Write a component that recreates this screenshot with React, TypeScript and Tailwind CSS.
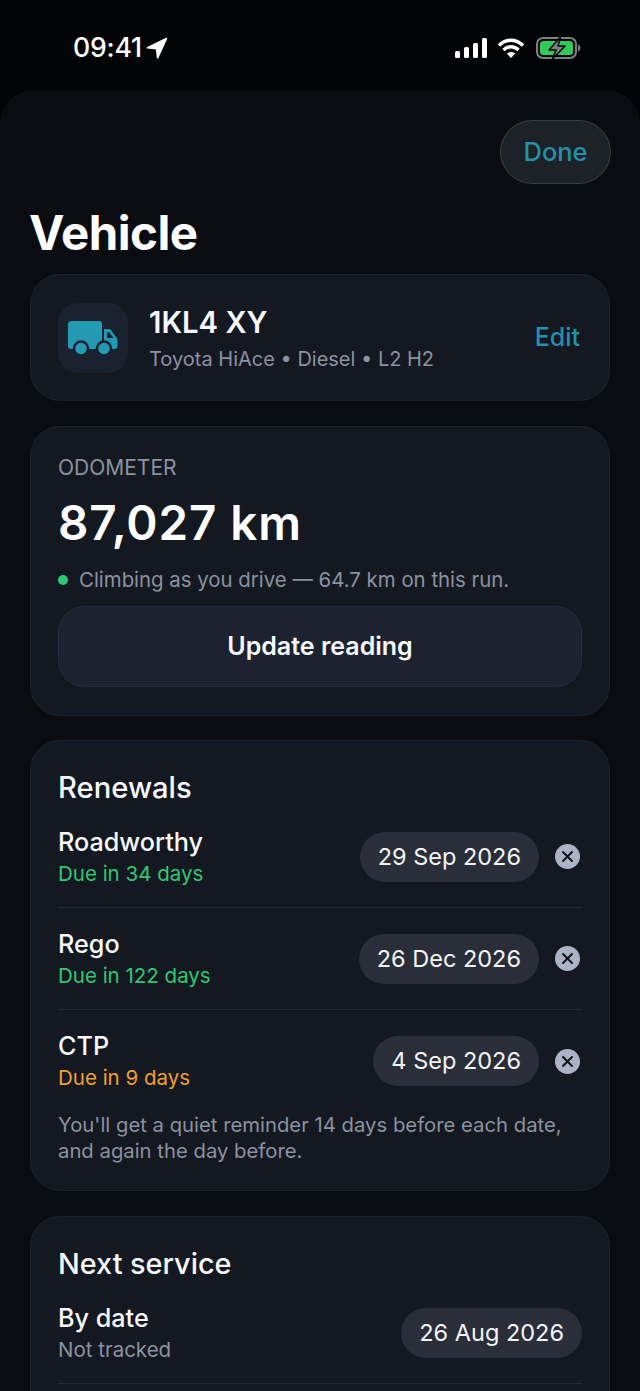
import React from "react";

const font = { fontFamily: "Inter, 'Noto Sans', sans-serif" };

function Row({ title, sub, subCls, date, clear, border }: { title: string; sub: string; subCls: string; date: string; clear?: boolean; border?: boolean }) {
  return (
    <div className={`flex items-center justify-between h-[102px] ${border ? "border-b border-[#232833]" : ""}`}>
      <div className="flex flex-col">
        <span className="text-[25.2px] leading-[34px] font-medium text-[#f7f8fa]">{title}</span>
        <span className={`text-[20.5px] leading-[30px] ${subCls}`}>{sub}</span>
      </div>
      <div className="flex items-center">
        <div className="h-[50px] px-[18px] rounded-full bg-[#2a2e39] flex items-center text-[23.5px] text-[#f3f4f6]">{date}</div>
        {clear && (
          <div className="ml-[16px] mr-[2px] w-[25px] h-[25px] rounded-full bg-[#aab4c4] flex items-center justify-center">
            <svg width="13" height="13" viewBox="0 0 13 13"><path d="M2 2l9 9M11 2l-9 9" stroke="#10141c" strokeWidth="2" strokeLinecap="round" /></svg>
          </div>
        )}
      </div>
    </div>
  );
}

const card = "mx-[30px] rounded-[30px] bg-[#141821] border border-[#1c212b] px-[27px]";

export default function App() {
  return (
    <div style={font} className="h-[1391px] w-[640px] overflow-hidden bg-[#020304] text-white">
      <div className="h-[90px] relative flex items-start justify-between pl-[73px] pr-[59px] pt-[30px]">
        <div className="flex items-center h-[36px]">
          <span className="text-[26.6px] font-medium tracking-[-0.2px]">09:41</span>
          <svg className="ml-[4px]" width="22" height="22" viewBox="0 0 22 22"><path d="M20.5 1.5 L1.5 10.8 L10.6 11.6 L11.6 20.8 Z" fill="#fff" stroke="#fff" strokeWidth="1.6" strokeLinejoin="round" /></svg>
        </div>
        <div className="flex items-center h-[36px] gap-[10px]">
          <svg width="33" height="22" viewBox="0 0 33 22" fill="#fff">
            <rect x="0" y="14" width="5" height="7" rx="1.5" />
            <rect x="9" y="10" width="5" height="11" rx="1.5" />
            <rect x="18" y="6" width="5" height="15" rx="1.5" />
            <rect x="27" y="1" width="5" height="20" rx="1.5" />
          </svg>
          <svg width="28" height="22" viewBox="0 0 28 22" fill="none" stroke="#fff" strokeWidth="3.4">
            <path d="M1 8.5C8 1.500 18 1.500 25 8.500" />
            <path d="M5.500 13C10 8.700 16 8.700 20.500 13" />
            <path d="M13 21l-4.200-4.400c2.400-2 6-2 8.400 0z" fill="#fff" stroke="none" />
          </svg>
          <svg width="45" height="24" viewBox="0 0 45 24">
            <rect x="1" y="2" width="39" height="20" rx="6" fill="none" stroke="#7d7f82" strokeWidth="2" />
            <rect x="4" y="5" width="33" height="14" rx="3.500" fill="#34c759" />
            <path d="M42 8.500c3 .5 3 6.500 0 7z" fill="#7d7f82" />
            <path d="M24.500 1 L13 14 H20 L16.500 23 L29 10 H22 Z" fill="#7d7f82" stroke="#020304" strokeWidth="1.500" strokeLinejoin="round" />
          </svg>
        </div>
      </div>
      <div className="h-[1301px] rounded-t-[34px] bg-[#0a0c11]">
        <div className="flex justify-end pt-[30px] pr-[29px]">
          <div className="w-[111px] h-[64px] rounded-[32px] bg-[#1d2128] border border-[#3a3e45] flex items-center justify-center text-[25.4px] font-medium text-[#2590a8]">Done</div>
        </div>
        <div className="ml-[29px] mt-[11px] h-[79px] text-[47.4px] leading-[76px] font-bold tracking-[-0.5px] text-white">Vehicle</div>

        <div className={`${card} h-[127px] flex items-center justify-between`}>
          <div className="flex items-center">
            <div className="w-[70px] h-[70px] rounded-[20px] bg-[#1a2230] flex items-center justify-center">
              <svg width="50" height="36" viewBox="0 0 50 36">
                <path d="M4 1h27a3 3 0 0 1 3 3v25H3a3 3 0 0 1-3-3V5a4 4 0 0 1 4-4z" fill="#2499b3" />
                <path d="M36 9h6l7.500 10v7a3 3 0 0 1-3 3H36z" fill="#2499b3" />
                <path d="M39 12.500h2.500l4 5.500H39z" fill="#1a2230" />
                <circle cx="13" cy="28.500" r="7" fill="#2499b3" stroke="#1a2230" strokeWidth="2.500" />
                <circle cx="36" cy="28.500" r="7" fill="#2499b3" stroke="#1a2230" strokeWidth="2.500" />
              </svg>
            </div>
            <div className="ml-[21px] pt-[4px] flex flex-col">
              <span className="text-[29.3px] leading-[38px] font-semibold text-[#f7f8fa]">1KL4 XY</span>
              <span className="text-[20px] leading-[34px] text-[#8b92a0]">Toyota HiAce • Diesel • L2 H2</span>
            </div>
          </div>
          <span className="text-[25px] font-medium text-[#2590a8] mr-[2px] pt-[1px]">Edit</span>
        </div>

        <div className={`${card} mt-[25px] h-[290px] pt-[26px]`}>
          <div className="text-[21px] leading-[30px] text-[#8b92a0]">ODOMETER</div>
          <div className="mt-[12px] text-[47.5px] leading-[56px] font-semibold text-white tracking-[0.9px]">87,027 km</div>
          <div className="mt-[14px] flex items-center h-[30px]">
            <span className="w-[10px] h-[10px] rounded-full bg-[#2fc872]" />
            <span className="ml-[11px] text-[20.4px] text-[#8b92a0]">Climbing as you drive — 64.7 km on this run.</span>
          </div>
          <div className="mt-[11px] h-[81px] rounded-[26px] bg-[#1c2230] border border-[#262c3a] flex items-center justify-center text-[25px] font-semibold text-[#f7f8fa]">Update reading</div>
        </div>

        <div className={`${card} mt-[24px] h-[451px]`}>
          <div className="pt-[26px] h-[65px] text-[29.2px] leading-[42px] font-medium text-[#f7f8fa]">Renewals</div>
          <Row title="Roadworthy" sub="Due in 34 days" subCls="text-[#2fc872]" date="29 Sep 2026" clear border />
          <Row title="Rego" sub="Due in 122 days" subCls="text-[#2fc872]" date="26 Dec 2026" clear border />
          <Row title="CTP" sub="Due in 9 days" subCls="text-[#f0a030]" date="4 Sep 2026" clear />
          <div className="text-[20.3px] leading-[26px] text-[#8b92a0]">You'll get a quiet reminder 14 days before each date, and again the day before.</div>
        </div>

        <div className={`${card} mt-[25px] h-[300px]`}>
          <div className="pt-[26px] h-[65px] text-[28.8px] leading-[42px] font-medium text-[#f7f8fa]">Next service</div>
          <Row title="By date" sub="Not tracked" subCls="text-[#8b92a0]" date="26 Aug 2026" border />
        </div>
      </div>
    </div>
  );
}
